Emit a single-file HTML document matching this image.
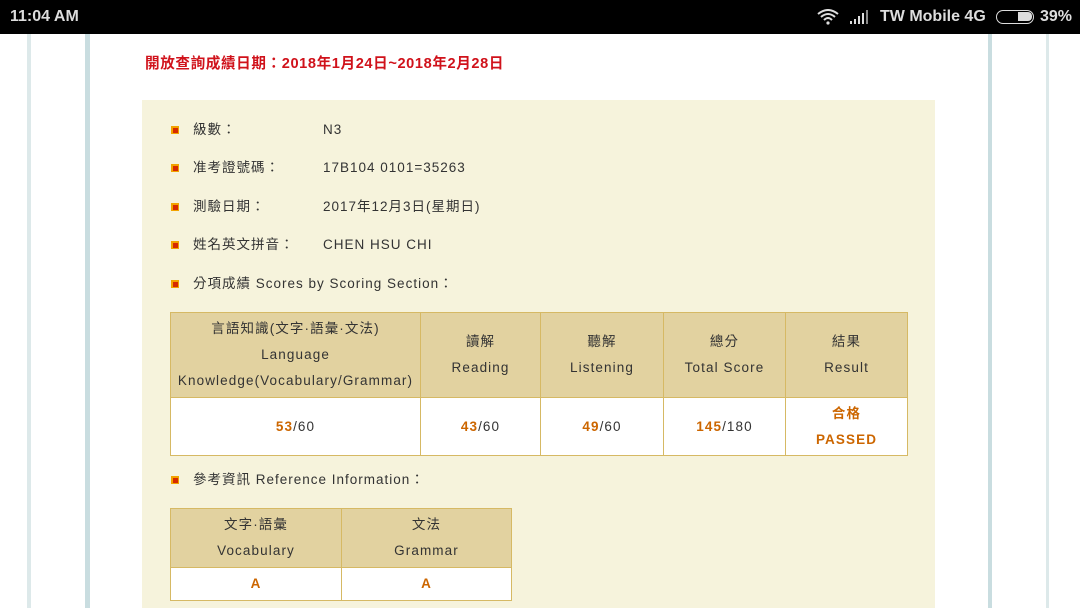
<!DOCTYPE html>
<html><head><meta charset="utf-8"><style>
*{margin:0;padding:0;box-sizing:border-box}
body{width:1080px;height:608px;overflow:hidden;background:#fff;font-family:"Liberation Sans","Noto Sans CJK TC",sans-serif;position:relative;color:#333}
.sb{position:absolute;left:0;top:0;width:1080px;height:34px;background:#000;color:#ddd;font-weight:bold;font-size:16px}
.v{position:absolute;top:34px;height:574px}
.red{position:absolute;left:145px;top:52px;color:#d0121b;font-weight:bold;font-size:14.6px;letter-spacing:0.6px}
.box{position:absolute;left:142px;top:100px;width:793px;height:508px;background:#f6f3dc}
.it{position:absolute;left:171px;font-size:13.5px;letter-spacing:1px;color:#333;height:18px}
.it i{position:absolute;left:0;top:6px;width:8px;height:8px;background:#f2a300;}
.it i:after{content:"";position:absolute;left:2px;top:2px;width:5px;height:5px;background:#d62a00}
.it span,.it b{position:absolute;top:0;line-height:20px;height:20px;white-space:nowrap}
.it span{left:22px}
.it b{left:152px;font-weight:normal}
table{position:absolute;border-collapse:collapse;font-size:13.5px;letter-spacing:1.1px;color:#333}
td{border:1px solid #d6b964;text-align:center;line-height:26px;padding:0}
.h td{background:#e2d2a0}
.d td{background:#fff}
.o{color:#cc6600;font-weight:bold}
</style></head><body>
<div class="sb"><span style="position:absolute;left:10px;top:8px">11:04 AM</span>
<svg style="position:absolute;left:817px;top:9px" width="22" height="16" viewBox="0 0 22 16"><path d="M1 5Q11-3 21 5M4 8Q11 2 18 8M7 11Q11 7 15 11" stroke="#ddd" stroke-width="2" fill="none"/><circle cx="11" cy="14" r="1.6" fill="#ddd"/></svg>
<svg style="position:absolute;left:849px;top:10px" width="22" height="14"><rect x="1" y="11" width="2" height="3" fill="#ddd"/><rect x="5" y="9" width="2" height="5" fill="#ddd"/><rect x="9" y="6" width="2" height="8" fill="#ddd"/><rect x="13" y="3" width="2" height="11" fill="#ddd"/><rect x="17" y="0" width="2" height="14" fill="#888"/></svg>
<span style="position:absolute;left:880px;top:8px">TW Mobile 4G</span>
<div style="position:absolute;left:996px;top:10px;width:38px;height:14px;border:1.5px solid #ddd;border-radius:7px"><div style="position:absolute;right:1px;top:1px;width:14px;height:9px;background:#ddd;border-radius:0 4px 4px 0"></div></div>
<span style="position:absolute;left:1040px;top:8px">39%</span></div>
<div class="v" style="left:27px;width:4px;background:#dde9ea"></div>
<div class="v" style="left:85px;width:5px;background:#c9dde0"></div>
<div class="v" style="left:988px;width:4px;background:#c9dde0"></div>
<div class="v" style="left:1046px;width:3px;background:#dde9ea"></div>
<div class="red">開放查詢成績日期：2018年1月24日~2018年2月28日</div>
<div class="box"></div>
<div class="it" style="top:120px"><i></i><span>級數：</span><b>N3</b></div>
<div class="it" style="top:158px"><i></i><span>准考證號碼：</span><b>17B104 0101=35263</b></div>
<div class="it" style="top:197px"><i></i><span>測驗日期：</span><b>2017年12月3日(星期日)</b></div>
<div class="it" style="top:235px"><i></i><span>姓名英文拼音：</span><b>CHEN HSU CHI</b></div>
<div class="it" style="top:274px"><i></i><span>分項成績 Scores by Scoring Section：</span></div>
<table style="left:170px;top:312px;width:738px">
<tr class="h" style="height:85px"><td style="width:250px">言語知識(文字·語彙·文法)<br>Language<br>Knowledge(Vocabulary/Grammar)</td><td style="width:120px">讀解<br>Reading</td><td style="width:123px">聽解<br>Listening</td><td style="width:122px">總分<br>Total Score</td><td>結果<br>Result</td></tr>
<tr class="d" style="height:58px"><td><span class="o">53</span>/60</td><td><span class="o">43</span>/60</td><td><span class="o">49</span>/60</td><td><span class="o">145</span>/180</td><td class="o">合格<br>PASSED</td></tr>
</table>
<div class="it" style="top:470px"><i></i><span>參考資訊 Reference Information：</span></div>
<table style="left:170px;top:508px;width:342px">
<tr class="h" style="height:59px"><td style="width:171px">文字·語彙<br>Vocabulary</td><td>文法<br>Grammar</td></tr>
<tr class="d" style="height:33px"><td class="o">A</td><td class="o">A</td></tr>
</table>
</body></html>
